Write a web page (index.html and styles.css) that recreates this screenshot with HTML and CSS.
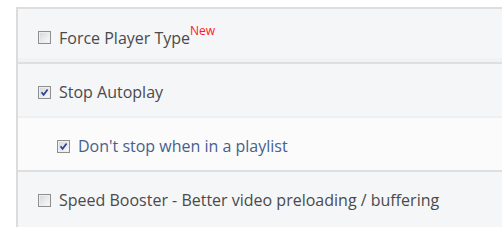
FILE: index.html
```html
<!DOCTYPE html>
<html>
<head>
<meta charset="utf-8">
<link rel="stylesheet" href="styles.css">
</head>
<body>
<div class="panel">
  <div class="row first">
    <span class="cb"></span>
    <span class="label">Force Player Type<sup class="new">New</sup></span>
  </div>
  <div class="row parent">
    <span class="cb checked"><svg viewBox="0 0 11 11" width="11" height="11"><path d="M2.5 5.2 L4.6 7.8 L8.6 2.4" fill="none" stroke="#2b3f9c" stroke-width="1.7"/></svg></span>
    <span class="label">Stop Autoplay</span>
  </div>
  <div class="row sub">
    <span class="cb checked"><svg viewBox="0 0 11 11" width="11" height="11"><path d="M2.5 5.2 L4.6 7.8 L8.6 2.4" fill="none" stroke="#2b3f9c" stroke-width="1.7"/></svg></span>
    <span class="label">Don't stop when in a playlist</span>
  </div>
  <div class="row last">
    <span class="cb"></span>
    <span class="label">Speed Booster - Better video preloading / buffering</span>
  </div>
</div>
</body>
</html>
```
FILE: styles.css
```css
html, body {
  margin: 0;
  padding: 0;
  background: #ffffff;
}
body {
  font-family: "Open Sans", "Liberation Sans", sans-serif;
  font-size: 16px;
  color: #4a4a4a;
}
.panel {
  margin-left: 16px;
  margin-top: 7px;
  border-left: 2px solid #dcdcdc;
  border-top: 2px solid #dedede;
}
.row {
  display: flex;
  align-items: center;
  height: 48px;
  padding-top: 4px;
  padding-left: 20px;
  background: #f5f6f8;
  border-bottom: 2px solid #dedfe1;
  box-shadow: inset 0 -4px 0 #f1f2f4;
}
.row.first {
  height: 49px;
}
.row.parent {
  border-bottom-color: #eef0f2;
  box-shadow: none;
}
.row.sub {
  background: #fbfbfc;
  padding-left: 39px;
  box-shadow: none;
  color: #465f8e;
}
.row.last {
  border-bottom: none;
  box-shadow: none;
  padding-bottom: 8px;
}
.cb {
  box-sizing: border-box;
  width: 13px;
  height: 13px;
  border: 1px solid #8e8f8f;
  background: linear-gradient(135deg, #d6d6d6 0%, #f4f4f4 80%, #ffffff 100%);
  box-shadow: inset 0 0 0 1px #eeeeee;
  margin-right: 8px;
  display: flex;
  align-items: center;
  justify-content: center;
  flex: none;
}
.cb svg {
  display: block;
}
.label {
  white-space: nowrap;
  line-height: 22px;
}
.new {
  color: #ff1a1a;
  font-size: 12px;
  position: relative;
  top: -2px;
  vertical-align: super;
  line-height: 0;
}
```
